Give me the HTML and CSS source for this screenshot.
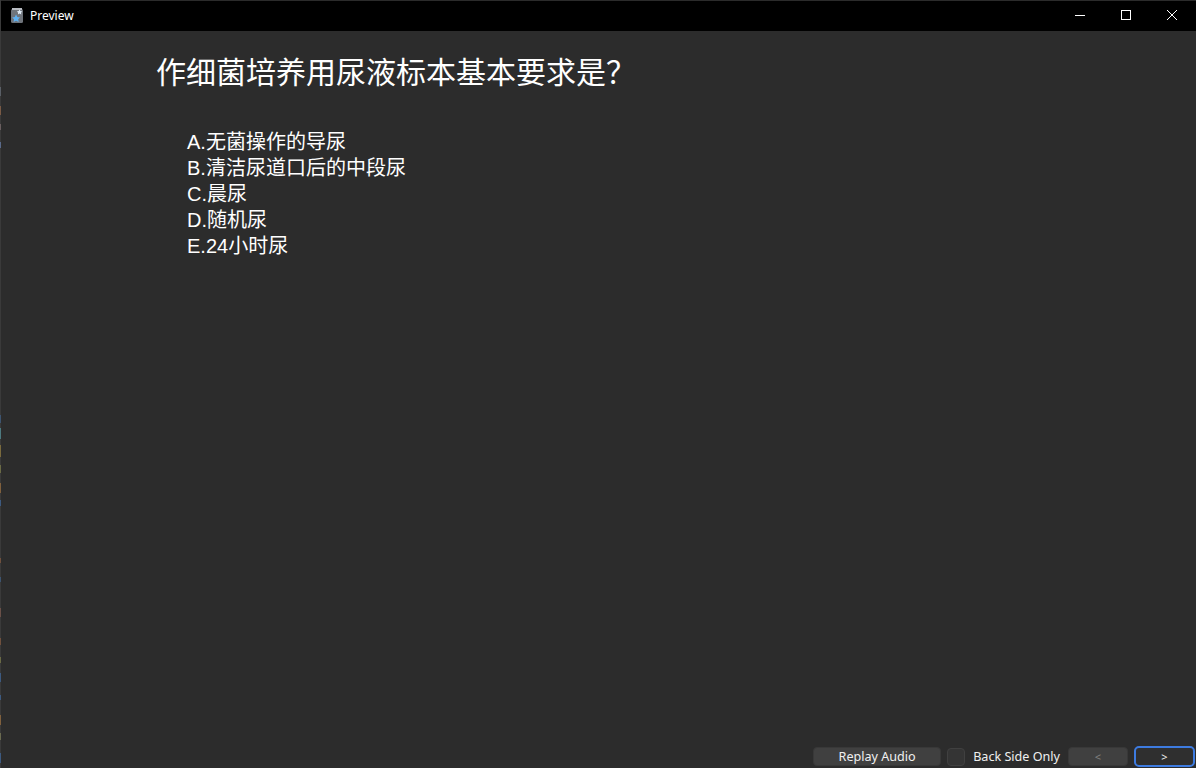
FILE: index.html
```html
<!DOCTYPE html>
<html lang="zh">
<head>
<meta charset="utf-8">
<title>Preview</title>
<link rel="stylesheet" href="styles.css">
</head>
<body>
<div class="window">
  <header class="titlebar">
    <div class="app">
      <svg class="app-icon" width="14" height="16" viewBox="0 0 14 16" aria-hidden="true">
        <rect x="1" y="1" width="12" height="14" rx="1.5" fill="#6f747b"/>
        <rect x="2" y="0" width="10" height="2" fill="#b9bcc2"/>
        <path d="M9.5 1.5l1 1.6 1.8.3-1.3 1.3.3 1.8-1.8-.9-1.6.9.3-1.8-1.3-1.3 1.8-.3z" fill="#e2edf8"/>
        <path d="M6 6.5l1.4 2.5 2.7.4-1.9 1.9.5 2.7-2.7-1.3-2.4 1.3.4-2.7-1.9-1.9 2.7-.4z" fill="#5fb0f0"/>
      </svg>
      <span class="app-name">Preview</span>
    </div>
    <div class="controls">
      <svg class="control" width="46" height="30" viewBox="0 0 46 30" aria-hidden="true"><path d="M18 15.5h10" stroke="#fff" fill="none"/></svg>
      <svg class="control" width="46" height="30" viewBox="0 0 46 30" aria-hidden="true"><rect x="18.5" y="10.5" width="9" height="9" stroke="#fff" fill="none"/></svg>
      <svg class="control" width="46" height="30" viewBox="0 0 46 30" aria-hidden="true"><path d="M18 10l10 10M28 10L18 20" stroke="#fff" fill="none"/></svg>
    </div>
  </header>
  <main class="content">
    <h1 class="question">作细菌培养用尿液标本基本要求是？</h1>
    <ul class="options">
      <li>A.无菌操作的导尿</li>
      <li>B.清洁尿道口后的中段尿</li>
      <li>C.晨尿</li>
      <li>D.随机尿</li>
      <li>E.24小时尿</li>
    </ul>
  </main>
  <footer class="actions">
    <button class="btn btn-replay" type="button">Replay Audio</button>
    <label class="check"><span class="box"></span><span>Back Side Only</span></label>
    <button class="btn btn-nav btn-disabled" type="button">&lt;</button>
    <button class="btn btn-nav btn-focus" type="button">&gt;</button>
  </footer>
</div>
</body>
</html>
```

FILE: styles.css
```css
* { box-sizing: border-box; }
html, body { height: 100%; margin: 0; }
body {
  background: #2c2c2c;
  color: #fff;
  overflow: hidden;
  font-family: "Liberation Sans", "Noto Sans CJK SC", sans-serif;
}
.window {
  position: relative;
  height: 768px;
  display: flex;
  flex-direction: column;
  padding-left: 1px;
}
/* The sliver of desktop showing through along the left window edge */
.window::before {
  content: "";
  position: absolute;
  left: 0;
  top: 0;
  bottom: 0;
  width: 1px;
  background:
    linear-gradient(to bottom,
      #3a3a3a 0 87px, #5a5f66 87px 96px, #3a3a3a 96px 106px, #7a5a45 106px 115px,
      #3a3a3a 115px 124px, #6a5f60 124px 130px, #3a3a3a 130px 142px, #5a6a8a 142px 148px,
      #3a3a3a 148px 415px, #3d5470 415px 423px, #3a3a3a 423px 428px, #4d7a80 428px 439px,
      #3a3a3a 439px 445px, #7a6a3d 445px 457px, #3a3a3a 457px 465px, #6a6a45 465px 473px,
      #3a3a3a 473px 483px, #80603d 483px 493px, #3a3a3a 493px 500px, #3d5a80 500px 506px,
      #3a3a3a 506px 558px, #70503d 558px 563px, #3a3a3a 563px 577px, #3d5470 577px 582px,
      #3a3a3a 582px 608px, #6a5048 608px 617px, #3a3a3a 617px 638px, #70503d 638px 645px,
      #3a3a3a 645px 657px, #6a6a45 657px 663px, #3a3a3a 663px 673px, #3d5a80 673px 682px,
      #3a3a3a 682px 695px, #3d5a80 695px 700px, #3a3a3a 700px 715px, #80603d 715px 725px,
      #3a3a3a 725px 733px, #6a6a50 733px 740px, #3a3a3a 740px 753px, #3d5a80 753px 763px,
      #3a3a3a 763px);
}
.titlebar {
  height: 31px;
  flex: none;
  background: #000;
  border-top: 1px solid #2b2b2b;
  display: flex;
  justify-content: space-between;
  align-items: flex-start;
}
.app {
  display: flex;
  align-items: center;
  height: 29px;
  padding-left: 9px;
  gap: 6px;
}
.app-name {
  font: 12px "Noto Sans", "Open Sans", sans-serif;
  color: #fff;
}
.controls { display: flex; margin-top: -1px; margin-right: 1px; }
.control { display: block; }
.content {
  flex: 1;
  padding-left: 155px;
  min-height: 0;
}
.question {
  margin: 22px 0 0;
  font-size: 30px;
  line-height: 40px;
  font-weight: 400;
}
.options {
  list-style: none;
  margin: 36px 0 0;
  padding: 0 0 0 31px;
  font-size: 20px;
  line-height: 26px;
}
.actions {
  flex: none;
  height: 21px;
  margin-bottom: 1px;
  padding-right: 1px;
  display: flex;
  justify-content: flex-end;
  align-items: center;
  font: 12.6px "Noto Sans", "Open Sans", sans-serif;
  color: #f0f0f0;
}
.btn {
  height: 19px;
  padding: 0;
  border: 1px solid #383838;
  border-radius: 4px;
  background: #404040;
  color: #f0f0f0;
  font: inherit;
  line-height: 17px;
}
.btn-replay { width: 128px; margin-right: 6px; }
.check { display: flex; align-items: center; gap: 8px; margin-right: 8px; }
.box {
  width: 18px;
  height: 18px;
  border: 1px solid #404040;
  border-radius: 4px;
  background: #343434;
}
.btn-nav { width: 60px; font-size: 11px; }
.btn-disabled { color: #808080; margin-right: 6px; }
.btn-focus {
  height: 21px;
  width: 61px;
  border: 2px solid #3d7be0;
  border-radius: 5px;
  background: #2f2f2f;
}
```
